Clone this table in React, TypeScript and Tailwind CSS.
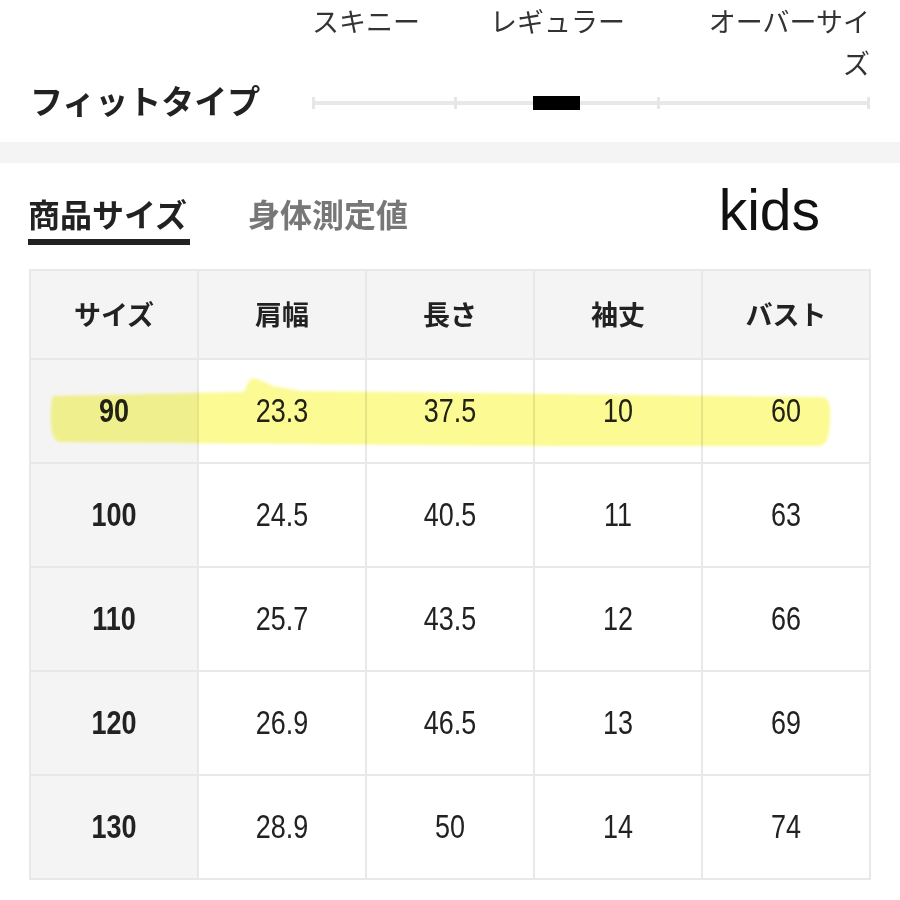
import React from 'react';

const jp = '"Noto Sans CJK JP", "Noto Sans", sans-serif';
const num = '"Liberation Sans", Arial, sans-serif';

const headers = ['サイズ', '肩幅', '長さ', '袖丈', 'バスト'];

const rows: string[][] = [
    ['90', '23.3', '37.5', '10', '60'],
    ['100', '24.5', '40.5', '11', '63'],
    ['110', '25.7', '43.5', '12', '66'],
    ['120', '26.9', '46.5', '13', '69'],
    ['130', '28.9', '50', '14', '74'],
];

// yellow marker stroke drawn over the "90" row
const Highlight: React.FC = () => (
    <svg className="absolute inset-0 pointer-events-none mix-blend-multiply" width="900" height="900" viewBox="0 0 900 900">
        <defs>
            <filter id="soft" x="-5%" y="-20%" width="110%" height="140%">
                <feGaussianBlur stdDeviation="1.6" />
            </filter>
        </defs>
        <path
            d="M54 396 L244 392 C247 386 249 380 252 378 C258 379 266 382 272 386 L300 391 L560 394 L822 397 C829 398 831 405 830 420 C829 436 828 444 820 446 L560 446 L300 444 L60 442 C53 441 51 432 51 418 C51 404 51 397 54 396 Z"
            fill="#f9f760"
            fillOpacity="0.68"
            filter="url(#soft)"
        />
    </svg>
);

const FitType: React.FC = () => (
    <div className="flex h-[142px] pl-[30px] pr-[30px]" style={{ fontFamily: jp }}>
        <div className="w-[282px] pt-[79px] text-[33px] leading-[42px] font-bold text-[#222]">フィットタイプ</div>
        <div className="flex-1 flex flex-col">
            <div className="flex h-[84px] text-[27px] leading-[42px] text-[#333]">
                <span className="w-[178px]">スキニー</span>
                <span className="w-[150px]">レギュラー</span>
                <span className="ml-auto w-[166px] text-right">オーバーサイズ</span>
            </div>
            <div className="relative mt-[12px] h-[14px]">
                <div className="absolute left-0 right-0 top-[5px] h-[4px] bg-[#e8e8e8]" />
                <div className="absolute left-0 top-[1px] h-[12px] w-[3px] bg-[#e6e6e6]" />
                <div className="absolute left-[142px] top-[1px] h-[12px] w-[3px] bg-[#e6e6e6]" />
                <div className="absolute left-[345px] top-[1px] h-[12px] w-[3px] bg-[#e6e6e6]" />
                <div className="absolute right-0 top-[1px] h-[12px] w-[3px] bg-[#e6e6e6]" />
                <div className="absolute left-[221px] top-0 h-[14px] w-[47px] bg-black" />
            </div>
        </div>
    </div>
);

const Tabs: React.FC = () => (
    <div className="flex items-start pl-[28px] pt-[30px]">
        <div className="w-[162px] border-b-[6px] border-[#222] pb-[6px] text-[32px] leading-[40px] font-bold text-[#222]" style={{ fontFamily: jp }}>
            商品サイズ
        </div>
        <div className="ml-[58px] text-[32px] leading-[40px] font-bold text-[#777]" style={{ fontFamily: jp }}>
            身体測定値
        </div>
        <div className="ml-auto mr-[80px] mt-[-11px] text-[57px] leading-none text-[#111]" style={{ fontFamily: num }}>
            kids
        </div>
    </div>
);

const SizeTable: React.FC = () => (
    <div className="mt-[24px] pl-[29px]">
        <table className="w-[842px] border-collapse table-fixed">
            <thead>
                <tr className="h-[89px]">
                    {headers.map((h) => (
                        <th key={h} className="border-2 border-[#e8e8e8] bg-[#f4f4f4] text-[27px] font-bold text-[#222]" style={{ fontFamily: jp }}>
                            {h}
                        </th>
                    ))}
                </tr>
            </thead>
            <tbody>
                {rows.map((r) => (
                    <tr key={r[0]} className="h-[104px]">
                        {r.map((v, i) => (
                            <td
                                key={i}
                                className={`border-2 border-[#e8e8e8] text-center text-[27px] text-[#222] ${i === 0 ? 'bg-[#f4f4f4] font-bold' : 'bg-white'}`}
                                style={{ fontFamily: num }}
                            >
                                <span className="inline-block scale-y-[1.2]">{v}</span>
                            </td>
                        ))}
                    </tr>
                ))}
            </tbody>
        </table>
    </div>
);

const App: React.FC = () => {
    return (
        <div className="relative w-[900px] h-[900px] overflow-hidden bg-white">
            <FitType />
            <div className="h-[21px] bg-[#f4f4f4]" />
            <Tabs />
            <SizeTable />
            <Highlight />
        </div>
    );
};

export default App;
